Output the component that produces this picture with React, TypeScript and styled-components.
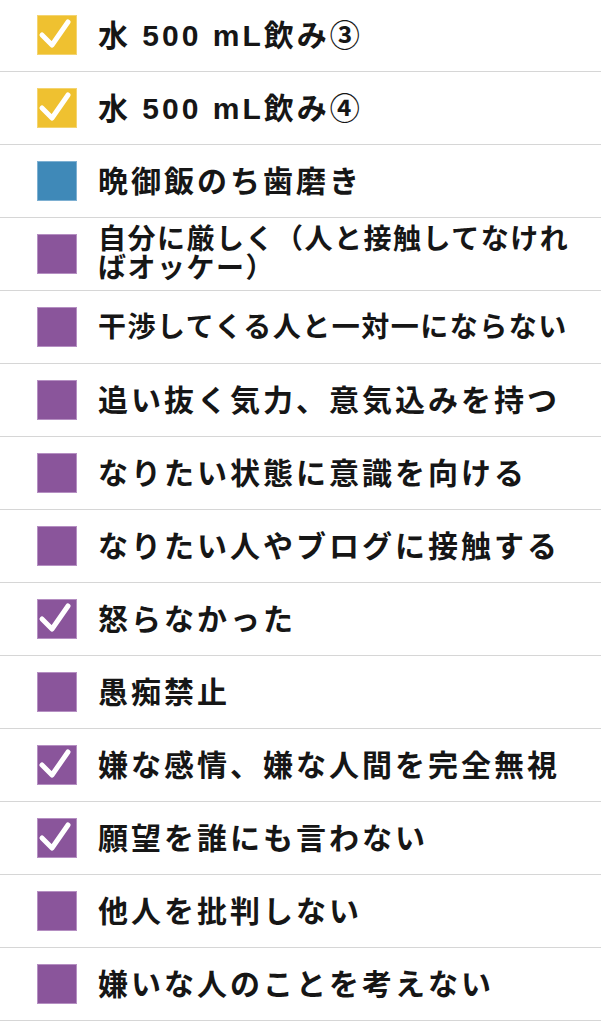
import React from 'react';
import styled, { createGlobalStyle } from 'styled-components';

const GlobalStyle = createGlobalStyle`
  html, body {
    margin: 0;
    padding: 0;
    background: #ffffff;
  }
  body {
    font-family: "Liberation Sans", "Noto Sans CJK JP", sans-serif;
  }
`

type Tone = 'yellow' | 'blue' | 'purple';

const tones: Record<Tone, { fill: string; edge: string }> = {
  yellow: { fill: '#efc130', edge: '#f4d470' },
  blue: { fill: '#3f89b8', edge: '#7eb0d2' },
  purple: { fill: '#8a559b', edge: '#b58fc2' },
};

const List = styled.ul`
  list-style: none;
  margin: -1px 0 0;
  padding: 0;
`
const Row = styled.li`
  display: flex;
  align-items: center;
  height: 72px;
  border-bottom: 1px solid #d6d6d6;
  padding: 0 18px 0 37px;
  box-sizing: content-box;
`
const Box = styled.span<{ $tone: Tone }>`
  flex: none;
  width: 40px;
  height: 40px;
  box-sizing: border-box;
  background: ${p => tones[p.$tone].fill};
  border: 1px solid ${p => tones[p.$tone].edge};
  display: flex;
  align-items: center;
  justify-content: center;
  margin-right: 21px;
`
const Label = styled.span<{ $compact?: boolean }>`
  font-size: ${p => (p.$compact ? '28px' : '30px')};
  letter-spacing: ${p => (p.$compact ? '1.5px' : '3px')};
  font-weight: 700;
  line-height: 29px;
  color: #161616;
`

const Check = () => (
  <svg width="38" height="38" viewBox="0 0 38 38">
    <path d="M4 19 L14 29 L30 6" fill="none" stroke="#ffffff" strokeWidth="5" strokeLinecap="round" strokeLinejoin="round" />
  </svg>
)

interface Item {
  text: string
  tone: Tone
  done: boolean
  compact?: boolean
}

const items: Item[] = [
  { text: '水 500 mL飲み③', tone: 'yellow', done: true },
  { text: '水 500 mL飲み④', tone: 'yellow', done: true },
  { text: '晩御飯のち歯磨き', tone: 'blue', done: false },
  { text: '自分に厳しく（人と接触してなければオッケー）', tone: 'purple', done: false, compact: true },
  { text: '干渉してくる人と一対一にならない', tone: 'purple', done: false, compact: true },
  { text: '追い抜く気力、意気込みを持つ', tone: 'purple', done: false },
  { text: 'なりたい状態に意識を向ける', tone: 'purple', done: false },
  { text: 'なりたい人やブログに接触する', tone: 'purple', done: false },
  { text: '怒らなかった', tone: 'purple', done: true },
  { text: '愚痴禁止', tone: 'purple', done: false },
  { text: '嫌な感情、嫌な人間を完全無視', tone: 'purple', done: true },
  { text: '願望を誰にも言わない', tone: 'purple', done: true },
  { text: '他人を批判しない', tone: 'purple', done: false },
  { text: '嫌いな人のことを考えない', tone: 'purple', done: false },
]

export default function App() {
  return (
    <>
      <GlobalStyle />
      <List>
        {items.map((item, i) => (
          <Row key={i}>
            <Box $tone={item.tone}>{item.done && <Check />}</Box>
            <Label $compact={item.compact}>{item.text}</Label>
          </Row>
        ))}
      </List>
    </>
  )
}
